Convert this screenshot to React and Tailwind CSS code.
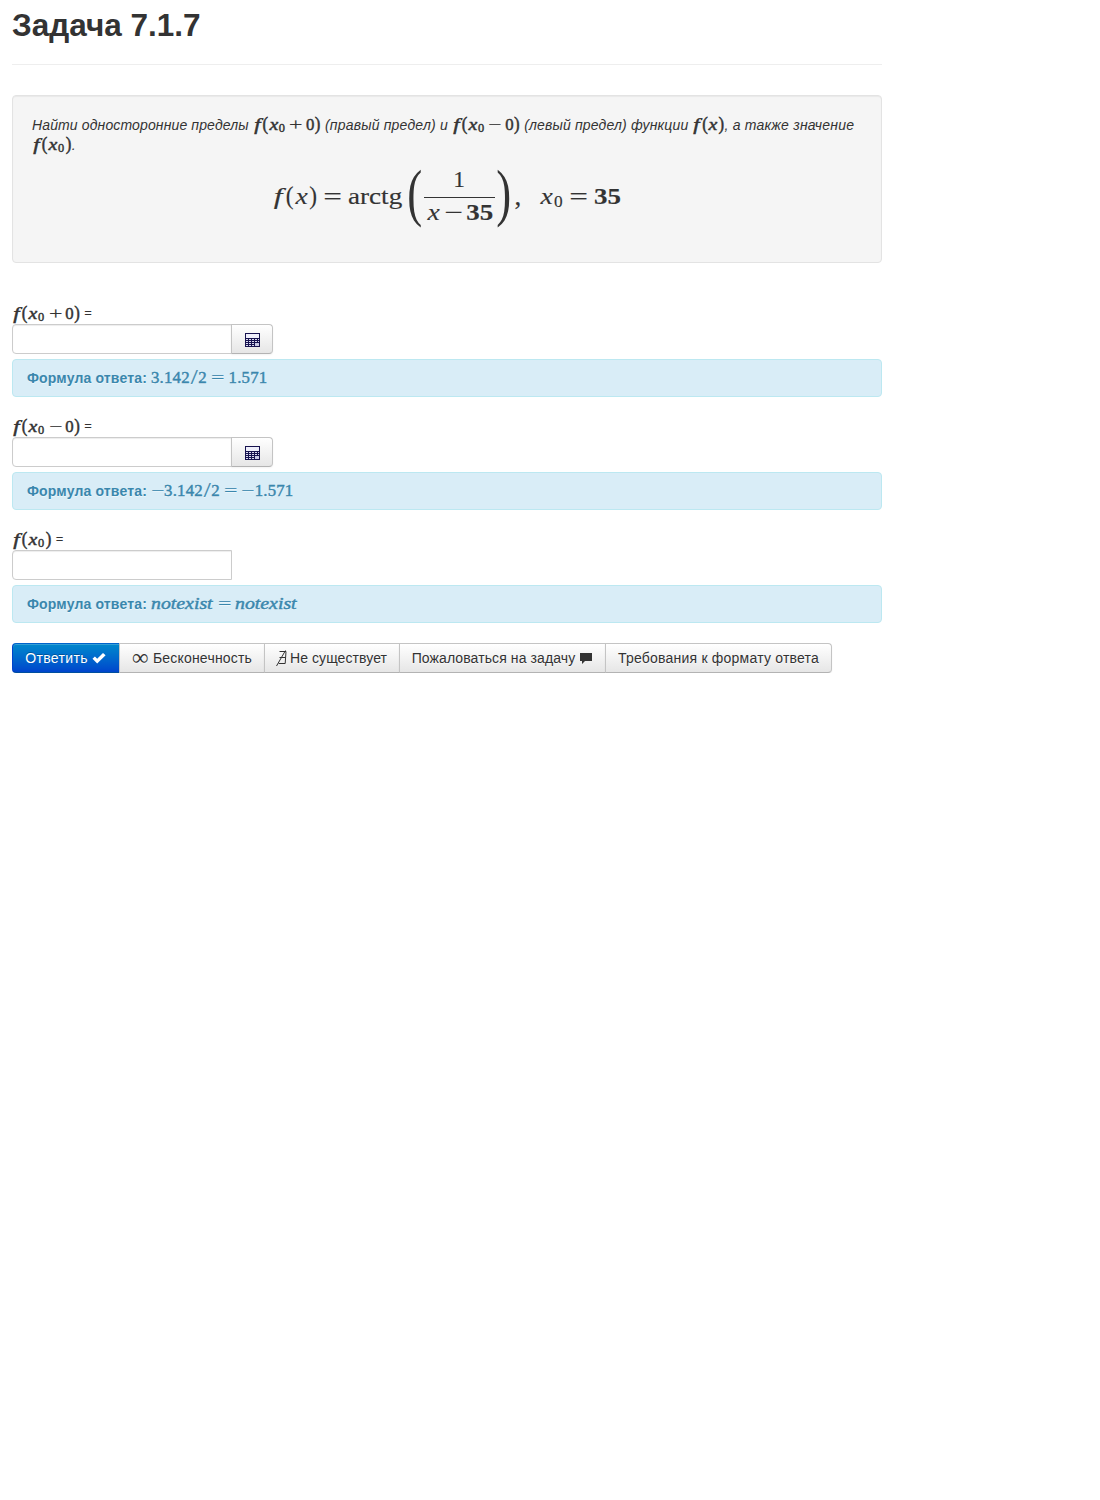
import React from 'react';

const serif = "font-['Liberation_Serif',serif]";

/* A glyph box with the advance width of the math font, in em. */
const G = ({ w, c = '', children }) => (
  <span className={`inline-block text-center whitespace-nowrap ${w} ${c}`}>{children}</span>
);
const F = () => <G w="w-[.53em] mr-[.03em]" c="italic scale-x-[1.35]">f</G>;
const X = () => <G w="w-[.572em]" c="italic scale-x-[1.18]">x</G>;
const LP = () => <G w="w-[.389em]"><span className="inline-block scale-y-[1.06]">(</span></G>;
const RP = () => <G w="w-[.389em]"><span className="inline-block scale-y-[1.06]">)</span></G>;
const Op = ({ children, w = 'w-[1.222em]' }) => (
  <G w={w}><span className="inline-block scale-x-[1.42] [-webkit-text-stroke:.1px]">{children}</span></G>
);
const Sub0 = () => (
  <span className="inline-block w-[.454em] pl-[.03em] leading-[0]">
    <span className="relative top-[.16em] text-[.74em]">0</span>
  </span>
);
const Inline = ({ children, c = '' }) => (
  <span className={`inline-flex h-5 items-baseline align-baseline leading-5 tracking-normal not-italic font-normal text-[16.8px] [-webkit-text-stroke:.45px_currentColor] ${serif} ${c}`}>
    {children}
  </span>
);
const Fx0 = ({ op }) => (
  <Inline>
    <F /><LP /><X /><Sub0 />
    {op && <><Op w="w-[1.2em]">{op}</Op><G w="w-[.5em]">0</G></>}
    <RP />
  </Inline>
);
const Half = () => <span className="tracking-[.2px]">3.142<G w="w-[.5em]"><span className="inline-block scale-x-[1.5] scale-y-[1.2] [-webkit-text-stroke:.15px]">/</span></G>2</span>;

const BigParen = ({ children }) => (
  <span className="relative -top-[4px] flex h-[60px] w-[16px] items-center justify-center text-[64px] leading-[60px] [-webkit-text-stroke:0]">
    <span className="scale-x-[.7]">{children}</span>
  </span>
);

const Display = () => (
  <div className={`flex h-[60px] items-center pl-[240px] text-[23.4px] leading-7 text-[#333] [-webkit-text-stroke:.15px_currentColor] ${serif}`}>
    <span className="mb-[2px] flex w-[135px] items-baseline whitespace-nowrap">
      <F /><LP /><span className="w-px" /><X /><RP />
      <Op w="w-[1.3em]">=</Op>
      <span className="inline-block origin-left scale-x-[1.16]">arctg</span>
    </span>
    <BigParen>(</BigParen>
    <span className="flex w-[72px] flex-col items-center pt-[2px]">
      <span className="h-[29px] leading-[23px]">1</span>
      <span className="h-px w-[71px] bg-[#333]" />
      <span className="flex h-[30px] items-baseline leading-[28px]">
        <X /><Op w="w-[1.2em]">−</Op><b className="inline-block scale-x-[1.15]">35</b>
      </span>
    </span>
    <span className="w-px" />
    <BigParen>)</BigParen>
    <span className="mb-[2px] flex items-baseline">
      <span className="w-[28px] pl-[3px]"><span className="inline-block scale-[1.15]">,</span></span>
      <X /><Sub0 /><Op w="w-[1.28em]">=</Op><b className="inline-block origin-left scale-x-[1.15]">35</b>
    </span>
  </div>
);

const Calc = () => (
  <svg className="relative left-px top-px" width="16" height="16" viewBox="0 0 16 16" shapeRendering="crispEdges">
    <rect x="0" y="1" width="15" height="14" fill="#17134f" />
    <rect x="1" y="2" width="13" height="4" fill="#efeffb" />
    {[7, 9, 11, 13].map((y) =>
      [1, 4, 7, 10, 13].map((x) => (
        <rect key={`${x}-${y}`} x={x} y={y} width={x < 13 ? 2 : 1} height="1" fill="#dcdcf2" />
      ))
    )}
    <rect x="10" y="11" width="4" height="3" fill="#c9c9e6" />
  </svg>
);

const Answer = ({ label, calc, children }) => (
  <div className="mb-5">
    <div className="flex h-5 items-baseline leading-5">
      {label}<span className="relative -top-[2px] ml-1 text-[13px]">=</span>
    </div>
    <div className="flex h-[30px]">
      <input className="h-[30px] w-[220px] rounded-l border border-[#ccc] bg-white px-1.5 shadow-[inset_0_1px_1px_rgba(0,0,0,0.075)] outline-none" />
      {calc && (
        <button className="-ml-px flex h-[30px] w-[42px] items-center justify-center rounded-r border border-[#c4c4c4] border-b-[#b3b3b3] bg-linear-to-b from-white to-[#e6e6e6] shadow-[inset_0_1px_0_rgba(255,255,255,0.2),0_1px_2px_rgba(0,0,0,0.05)]">
          <Calc />
        </button>
      )}
    </div>
    <div className="mt-[5px] flex h-[38px] items-baseline rounded border border-[#bce8f1] bg-[#d9edf7] px-3.5 pt-2 leading-5 text-[#3a87ad] [text-shadow:0_1px_0_rgba(255,255,255,0.5)]">
      <b className="mr-1 whitespace-nowrap tracking-[.16px]">Формула ответа:</b>
      {children}
    </div>
  </div>
);

const Btn = ({ w, c = '', children }) => (
  <button className={`-ml-px flex h-[30px] items-center justify-center gap-1 whitespace-nowrap border border-[#c4c4c4] border-b-[#b3b3b3] bg-linear-to-b from-white to-[#e6e6e6] leading-5 shadow-[inset_0_1px_0_rgba(255,255,255,0.2),0_1px_2px_rgba(0,0,0,0.05)] [text-shadow:0_1px_1px_rgba(255,255,255,0.75)] ${w} ${c}`}>
    {children}
  </button>
);

export default function App() {
  return (
    <main className="ml-3 w-[870px] font-['Liberation_Sans',Arial,sans-serif] text-[14px] leading-5 text-[#333]">
      <h2 className="h-[65px] border-b border-[#eee] pt-[5px] text-[31.5px] leading-10 font-bold">Задача 7.1.7</h2>
      <section className="mt-[30px] h-[168px] rounded border border-[#e3e3e3] bg-[#f5f5f5] p-[19px] shadow-[inset_0_1px_1px_rgba(0,0,0,0.05)]">
        <div className="italic">
          <div className="flex h-5 items-baseline gap-1 whitespace-nowrap tracking-[.13px]">
            <span>Найти односторонние пределы</span>
            <Fx0 op="+" />
            <span className="tracking-[.2px]">(правый предел) и</span>
            <Fx0 op="−" />
            <span className="tracking-[.17px]">(левый предел) функции</span>
            <span className="flex items-baseline tracking-[.2px]"><Inline><F /><LP /><X /><RP /></Inline>, а также значение</span>
          </div>
          <div className="flex h-5 items-baseline"><Fx0 />.</div>
        </div>
        <div className="mt-[12px]"><Display /></div>
      </section>
      <div className="mt-[41px]">
        <Answer calc label={<Fx0 op="+" />}>
          <Inline><Half /><Op w="w-[1.3em]">=</Op><span className="tracking-[.2px]">1.571</span></Inline>
        </Answer>
        <Answer calc label={<Fx0 op="−" />}>
          <Inline><Op w="w-[.778em]">−</Op><Half /><Op w="w-[1.3em]">=</Op><Op w="w-[.778em]">−</Op><span className="tracking-[.2px]">1.571</span></Inline>
        </Answer>
        <Answer label={<Fx0 />}>
          <Inline>
            <i className="inline-block w-[63px] origin-left scale-x-[1.18]">notexist</i>
            <Op w="w-[1.23em]">=</Op>
            <i className="inline-block w-[63px] origin-left scale-x-[1.18]">notexist</i>
          </Inline>
        </Answer>
      </div>
      <div className="flex pl-px">
        <button className="-ml-px flex h-[30px] w-[108px] items-center justify-center gap-1 rounded-l border border-[#04c] border-t-[#0064cc] border-b-[#002a80]/60 bg-linear-to-b from-[#08c] to-[#04c] pr-px tracking-[.35px] text-white shadow-[inset_0_1px_0_rgba(255,255,255,0.2)] [text-shadow:0_-1px_0_rgba(0,0,0,0.25)]">
          Ответить
          <svg width="14" height="12" viewBox="0 0 14 12"><path d="M.5 6.8 2.9 4.4 5.2 6.7 11 .9l2.6 2.4-8.4 8.2z" fill="white" /></svg>
        </button>
        <Btn w="w-[146px]" c="tracking-[.2px]"><span className="inline-block w-[17px] text-center font-['Liberation_Serif',serif] text-[23px] leading-[20px]">∞</span>Бесконечность</Btn>
        <Btn w="w-[136px]" c="tracking-[.08px]">
          <svg className="-ml-px" width="11" height="18" viewBox="0 0 11 18" fill="none" stroke="#333" strokeWidth="1"><path d="M3.5 2.5h6.5l-.8 12h-6.5M3.5 8.5h6M9.5 1.5.5 17" /></svg>
          <span className="-ml-px">Не существует</span>
        </Btn>
        <Btn w="w-[207px]" c="tracking-[.1px]">Пожаловаться на задачу<svg width="14" height="14" viewBox="0 0 14 14"><path d="M1 2h12v8H6l-3 3v-3H1z" fill="#333" /></svg></Btn>
        <Btn w="w-[227px]" c="rounded-r tracking-[.22px]">Требования к формату ответа</Btn>
      </div>
    </main>
  );
}
